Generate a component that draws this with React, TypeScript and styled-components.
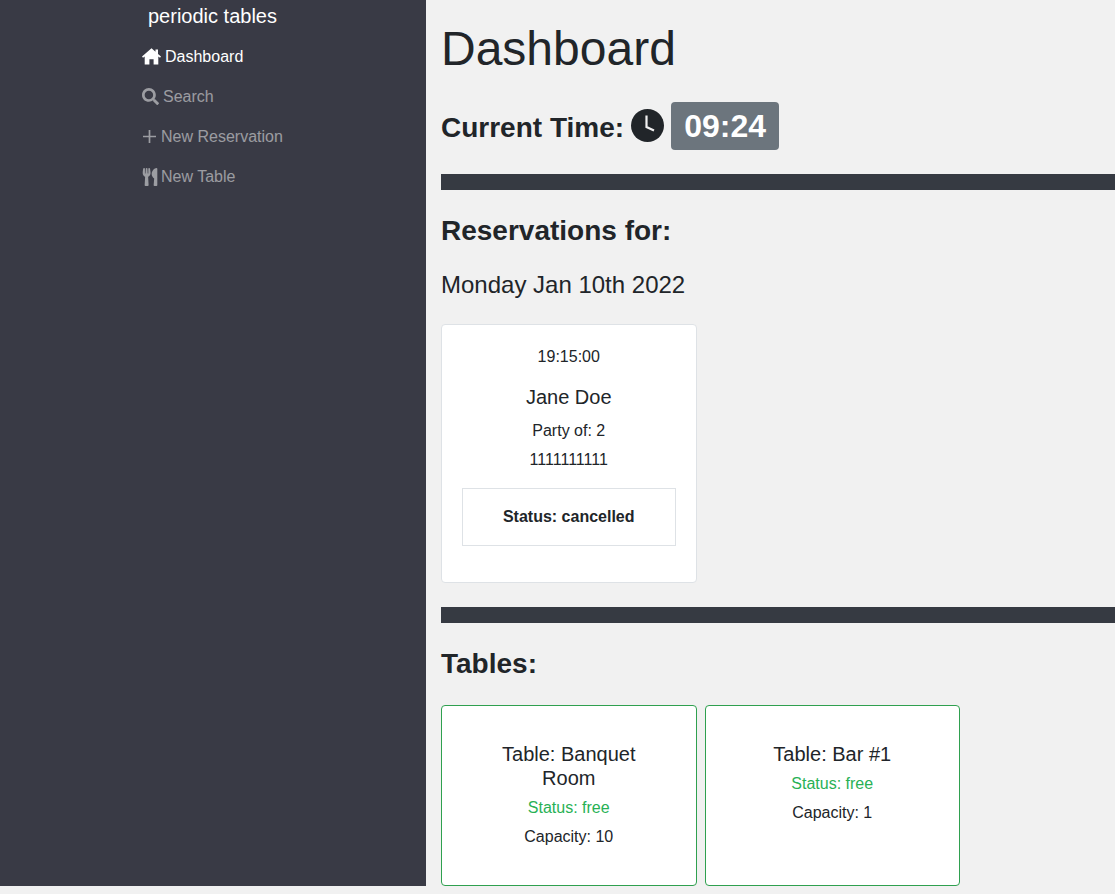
import React from "react";
import styled, { createGlobalStyle } from "styled-components";
import { FaSearch, FaUtensils } from "react-icons/fa";

const Global = createGlobalStyle`
  html, body { margin: 0; padding: 0; background: #f1f1f1; }
  body {
    font-family: "Liberation Sans", Arial, sans-serif;
    font-size: 16px;
    line-height: 1.5;
    color: #212529;
    overflow: hidden;
  }
  * { box-sizing: border-box; }
`;

const Page = styled.div`
  display: flex;
  align-items: stretch;
  width: 100%;
  padding-bottom: 8px;
`;

const Sidebar = styled.aside`
  flex: 0 0 426px;
  background: #393a45;
  padding-left: 142px;
`;

const Brand = styled.div`
  font-size: 20px;
  line-height: 30px;
  color: #fff;
  padding: 1px 0 5px 6px;
`;

const NavList = styled.nav`
  display: flex;
  flex-direction: column;
`;

const NavItem = styled.a<{ $active?: boolean }>`
  display: flex;
  align-items: center;
  gap: 4px;
  height: 40px;
  padding-top: 1px;
  color: ${(p) => (p.$active ? "#fff" : "rgba(255,255,255,0.5)")};
`;

const ForkIcon = styled(FaUtensils)`
  margin: 0 -1.5px;
`;

const Main = styled.main`
  flex: 1;
  min-width: 0;
  padding-left: 15px;
`;

const Title = styled.h1`
  margin: 0;
  padding-top: 20px;
  font-size: 48px;
  font-weight: 400;
  line-height: 58px;
`;

const TimeRow = styled.div`
  display: flex;
  align-items: center;
  gap: 7px;
  margin-top: 24px;
  height: 48px;
`;

const TimeLabel = styled.h2`
  margin: 4px 0 0;
  font-size: 28px;
  font-weight: 700;
  line-height: 34px;
`;

const ClockSvg = styled.svg`
  flex: none;
  margin-bottom: 2px;
`;

const TimeBadge = styled.span`
  display: inline-flex;
  align-items: center;
  justify-content: center;
  width: 108px;
  height: 48px;
  background: #6c757d;
  color: #fff;
  border-radius: 4px;
  font-size: 32px;
  font-weight: 700;
`;

const Bar = styled.div`
  height: 16px;
  background: #363a42;
  margin-top: 24px;
`;

const SectionHeading = styled.h2`
  margin: 24px 0 0;
  font-size: 28px;
  font-weight: 700;
  line-height: 34px;
`;

const DateLine = styled.div`
  margin-top: 22px;
  font-size: 24px;
  line-height: 29px;
`;

const Cards = styled.div<{ $top: number }>`
  display: flex;
  gap: 8px;
  margin-top: ${(p) => p.$top}px;
`;

const Card = styled.div`
  width: 255.5px;
  background: #fff;
  border: 1px solid #dee2e6;
  border-radius: 4px;
  padding: 20px 20px 36px;
  text-align: center;
`;

const Time = styled.div`
  line-height: 24px;
`;

const Name = styled.div`
  font-size: 20px;
  line-height: 24px;
  margin-top: 16px;
`;

const Detail = styled.div`
  line-height: 24px;
  margin-top: 10px;
`;

const Phone = styled.div`
  line-height: 24px;
  margin-top: 5px;
`;

const StatusBox = styled.div`
  margin-top: 16px;
  height: 58px;
  border: 1px solid #dee2e6;
  display: flex;
  align-items: center;
  justify-content: center;
  font-weight: 700;
`;

const TableCard = styled.div`
  width: 255.5px;
  height: 181px;
  background: #fff;
  border: 1px solid #2fa04f;
  border-radius: 4px;
  padding: 36px 40px 0;
  text-align: center;
`;

const TableName = styled.div`
  font-size: 20px;
  line-height: 24px;
`;

const TableStatus = styled.div`
  color: #28b155;
  line-height: 24px;
  margin-top: 6px;
`;

const TableCapacity = styled.div`
  line-height: 24px;
  margin-top: 5px;
`;

const HomeIcon = () => (
  <svg width="19" height="17" viewBox="0 0 19 17" fill="currentColor" aria-hidden="true">
    <path
      fillRule="evenodd"
      d="M9.5 0.3 L13.5 3.8 V1.6 H16 V6 L19 8.6 L18 9.8 L16.3 8.4 V16.6 H11.6 V11.2 H7.4 V16.6 H2.7 V8.4 L1 9.8 L0 8.6 Z"
    />
  </svg>
);

const PlusIcon = () => (
  <svg width="15" height="15" viewBox="0 0 15 15" fill="none" stroke="currentColor" strokeWidth="1.7" aria-hidden="true">
    <path d="M7.5 1 V14 M1 7.5 H14" />
  </svg>
);

const ClockIcon = () => (
  <ClockSvg width="33" height="33" viewBox="0 0 33 33" aria-hidden="true">
    <circle cx="16.5" cy="16.5" r="16.5" fill="#212529" />
    <path d="M15.5 6.5 V18 L23 21.5" fill="none" stroke="#f1f1f1" strokeWidth="2.2" />
  </ClockSvg>
);

const tables = [
  { name: "Table: Banquet Room", capacity: 10 },
  { name: "Table: Bar #1", capacity: 1 },
];

export default function App() {
  return (
    <>
      <Global />
      <Page>
        <Sidebar>
          <Brand>periodic tables</Brand>
          <NavList>
            <NavItem $active><HomeIcon />Dashboard</NavItem>
            <NavItem><FaSearch size={17} />Search</NavItem>
            <NavItem><PlusIcon />New Reservation</NavItem>
            <NavItem><ForkIcon size={18} />New Table</NavItem>
          </NavList>
        </Sidebar>
        <Main>
          <Title>Dashboard</Title>
          <TimeRow>
            <TimeLabel>Current Time:</TimeLabel>
            <ClockIcon />
            <TimeBadge>09:24</TimeBadge>
          </TimeRow>
          <Bar />
          <SectionHeading>Reservations for:</SectionHeading>
          <DateLine>Monday Jan 10th 2022</DateLine>
          <Cards $top={25}>
            <Card>
              <Time>19:15:00</Time>
              <Name>Jane Doe</Name>
              <Detail>Party of: 2</Detail>
              <Phone>1111111111</Phone>
              <StatusBox>Status: cancelled</StatusBox>
            </Card>
          </Cards>
          <Bar />
          <SectionHeading>Tables:</SectionHeading>
          <Cards $top={24}>
            {tables.map((t) => (
              <TableCard key={t.name}>
                <TableName>{t.name}</TableName>
                <TableStatus>Status: free</TableStatus>
                <TableCapacity>Capacity: {t.capacity}</TableCapacity>
              </TableCard>
            ))}
          </Cards>
        </Main>
      </Page>
    </>
  );
}
